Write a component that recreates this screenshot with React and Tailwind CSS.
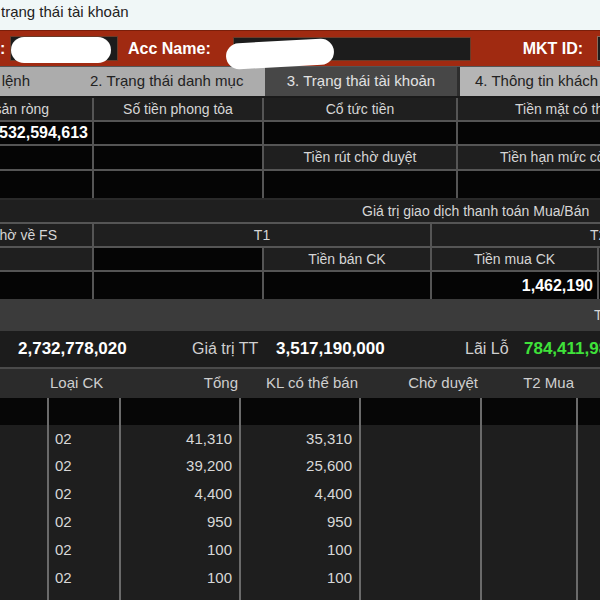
import React from "react";

const F = { fontFamily: '"Liberation Sans", Arial, sans-serif' };

function Num({ children, className = "" }) {
  return <span className={"whitespace-nowrap " + className}>{children}</span>;
}

export default function App() {
  const rows = [
    ["41,310", "35,310"],
    ["39,200", "25,600"],
    ["4,400", "4,400"],
    ["950", "950"],
    ["100", "100"],
    ["100", "100"],
    ["50", "50"],
  ];
  const hdr = "bg-[#1f1f1f] text-[#d6d6d6]";
  const blk = "bg-[#050505]";
  return (
    <div style={F} className="w-[600px] h-[600px] overflow-hidden bg-[#2a2a2a] relative">
      {/* title bar */}
      <div className="h-[30px] bg-[#f0f7f7] text-[15px] text-[#222] leading-[24px] pl-[1px]">
        trạng thái tài khoản
      </div>
      {/* red bar */}
      <div className="h-[36px] w-[700px] bg-[#a02a11] border-t border-[#7a1e0a] flex items-center relative">
        <span className="shrink-0 text-white font-bold text-[16px] w-[10px]">:</span>
        <div className="shrink-0 w-[108px] h-[25px] bg-[#1c1c1c] border border-[#6b3b28] relative">
          <div className="absolute left-0 top-0 w-[100px] h-[26px] bg-white rounded-full" />
        </div>
        <span className="shrink-0 ml-[10px] text-white font-bold text-[16px] whitespace-nowrap">Acc Name:</span>
        <div className="shrink-0 ml-[22px] w-[238px] h-[24px] bg-[#1c1c1c] border border-[#6b3b28] relative">
          <div className="absolute -left-[8px] top-[3px] w-[108px] h-[26px] bg-white rounded-full -rotate-3" />
        </div>
        <span className="shrink-0 ml-[52px] text-white font-bold text-[16px] whitespace-nowrap">MKT ID:</span>
        <div className="shrink-0 ml-[14px] w-[60px] h-[25px] bg-[#1c1c1c] border border-[#8a6a5a]" />
      </div>
      {/* tabs */}
      <div className="h-[30px] bg-[#acacac] border-t border-[#555] flex text-[15px] whitespace-nowrap">
        <div className="w-[265px] shrink-0 flex items-center overflow-hidden">
          <div className="w-[70px] shrink-0 flex justify-end overflow-hidden text-[#222]">
            <span className="whitespace-nowrap pr-[40px]">1. Sổ lệnh</span>
          </div>
          <span className="ml-[20px] text-[#222]">2. Trạng thái danh mục</span>
        </div>
        <div className="w-[192px] shrink-0 bg-[#474747] flex items-center justify-center text-[#e2e2e2]">
          3. Trạng thái tài khoản
        </div>
        <div className="w-[3px] shrink-0 bg-[#2e2e2e]" />
        <div className="flex-1 bg-[#b5b5b5] flex items-center pl-[15px] text-[#222]">
          4. Thông tin khách hàng
        </div>
      </div>

      {/* section 1 */}
      <div className="bg-[#555] border-t-2 border-[#1a1a1a] grid grid-cols-[92px_168px_192px_244px] gap-[2px] text-[14px] w-[710px]">
        <div className={hdr + " h-[22px] flex items-center justify-end overflow-hidden"}>
          <span className="whitespace-nowrap pr-[43px]">Tài sản ròng</span>
        </div>
        <div className={hdr + " flex items-center justify-center"}>Số tiền phong tỏa</div>
        <div className={hdr + " flex items-center justify-center"}>Cổ tức tiền</div>
        <div className={hdr + " flex items-center pl-[57px] whitespace-nowrap"}>Tiền mặt có thể rút</div>

        <div className={blk + " h-[22px] flex items-center justify-end overflow-hidden pr-[4px]"}>
          <Num className="text-white font-bold text-[16px]">2,532,594,613</Num>
        </div>
        <div className={blk} />
        <div className={blk} />
        <div className={blk} />

        <div className={blk + " h-[23px]"} />
        <div className={blk} />
        <div className={hdr + " flex items-center justify-center"}>Tiền rút chờ duyệt</div>
        <div className={hdr + " flex items-center pl-[42px] whitespace-nowrap"}>Tiền hạn mức còn lại</div>

        <div className={blk + " h-[27px]"} />
        <div className={blk} />
        <div className={blk} />
        <div className={blk} />
      </div>

      {/* section 2 */}
      <div className="bg-[#555] border-t-2 border-[#2a2a2a] grid grid-cols-[92px_168px_166px_165px_200px] gap-[2px] text-[14px] w-[800px]">
        <div className={hdr + " col-span-5 h-[22px] flex items-center pl-[362px] whitespace-nowrap"}>
          Giá trị giao dịch thanh toán Mua/Bán
        </div>

        <div className={hdr + " h-[22px] flex items-center justify-end overflow-hidden"}>
          <span className="whitespace-nowrap pr-[35px]">Tiền chờ về FS</span>
        </div>
        <div className={hdr + " col-span-2 flex items-center justify-center"}>T1</div>
        <div className={hdr + " col-span-2 flex items-center pl-[158px]"}>T2</div>

        <div className={hdr + " h-[22px]"} />
        <div className={blk} />
        <div className={hdr + " flex items-center justify-center"}>Tiền bán CK</div>
        <div className={hdr + " flex items-center justify-center"}>Tiền mua CK</div>
        <div className={hdr} />

        <div className={blk + " h-[27px]"} />
        <div className={blk} />
        <div className={blk} />
        <div className={blk + " flex items-center justify-end pr-[4px]"}>
          <Num className="text-white font-bold text-[16px]">1,462,190</Num>
        </div>
        <div className={blk} />
      </div>

      {/* gray band */}
      <div className="h-[32px] bg-[#3b3b3b] flex items-center pl-[594px] text-[14px] text-[#d6d6d6] whitespace-nowrap">
        Tổng
      </div>

      {/* summary */}
      <div className="h-[36px] bg-[#1c1c1c] flex items-center whitespace-nowrap">
        <div className="w-[180px] shrink-0 pl-[18px] text-white font-bold text-[17px]">2,732,778,020</div>
        <div className="w-[96px] shrink-0 pl-[12px] text-[#d0d0d0] text-[16px]">Giá trị TT</div>
        <div className="w-[189px] shrink-0 text-white font-bold text-[17px]">3,517,190,000</div>
        <div className="w-[59px] shrink-0 text-[#d0d0d0] text-[16px]">Lãi Lỗ</div>
        <div className="shrink-0 text-[#3fe23a] font-bold text-[17px]">784,411,980</div>
      </div>

      {/* bottom table header */}
      <div className="border-t-2 border-[#4a4a4a] h-[31px] bg-[#2b2b2b] grid grid-cols-[47px_70px_118px_118px_119px_94px_1fr] gap-x-[2px] text-[15px] text-[#cfcfcf] items-center whitespace-nowrap">
        <div />
        <div className="pl-[1px]">Loại CK</div>
        <div className="text-right pr-[1px]">Tổng</div>
        <div className="text-right pr-[1px]">KL có thể bán</div>
        <div className="text-right pr-[2px]">Chờ duyệt</div>
        <div className="text-right pr-[2px]">T2 Mua</div>
        <div />
      </div>
      {/* bottom table body */}
      <div className="bg-[#6a6a6a] grid grid-cols-[47px_70px_118px_118px_119px_94px_1fr] gap-x-[2px] text-[15px] text-[#d8d8d8]">
        {Array.from({ length: 7 }).map((_, i) => (
          <div key={"b" + i} className="h-[27px] bg-[#060606]" />
        ))}
        {rows.map((r, i) => (
          <React.Fragment key={i}>
            <div className="h-[27.8px] bg-[#1e1e1e]" />
            <div className="bg-[#1e1e1e] flex items-center pl-[6px]">02</div>
            <div className="bg-[#1e1e1e] flex items-center justify-end pr-[7px]">{r[0]}</div>
            <div className="bg-[#1e1e1e] flex items-center justify-end pr-[7px]">{r[1]}</div>
            <div className="bg-[#1e1e1e]" />
            <div className="bg-[#1e1e1e]" />
            <div className="bg-[#1e1e1e]" />
          </React.Fragment>
        ))}
      </div>
    </div>
  );
}
